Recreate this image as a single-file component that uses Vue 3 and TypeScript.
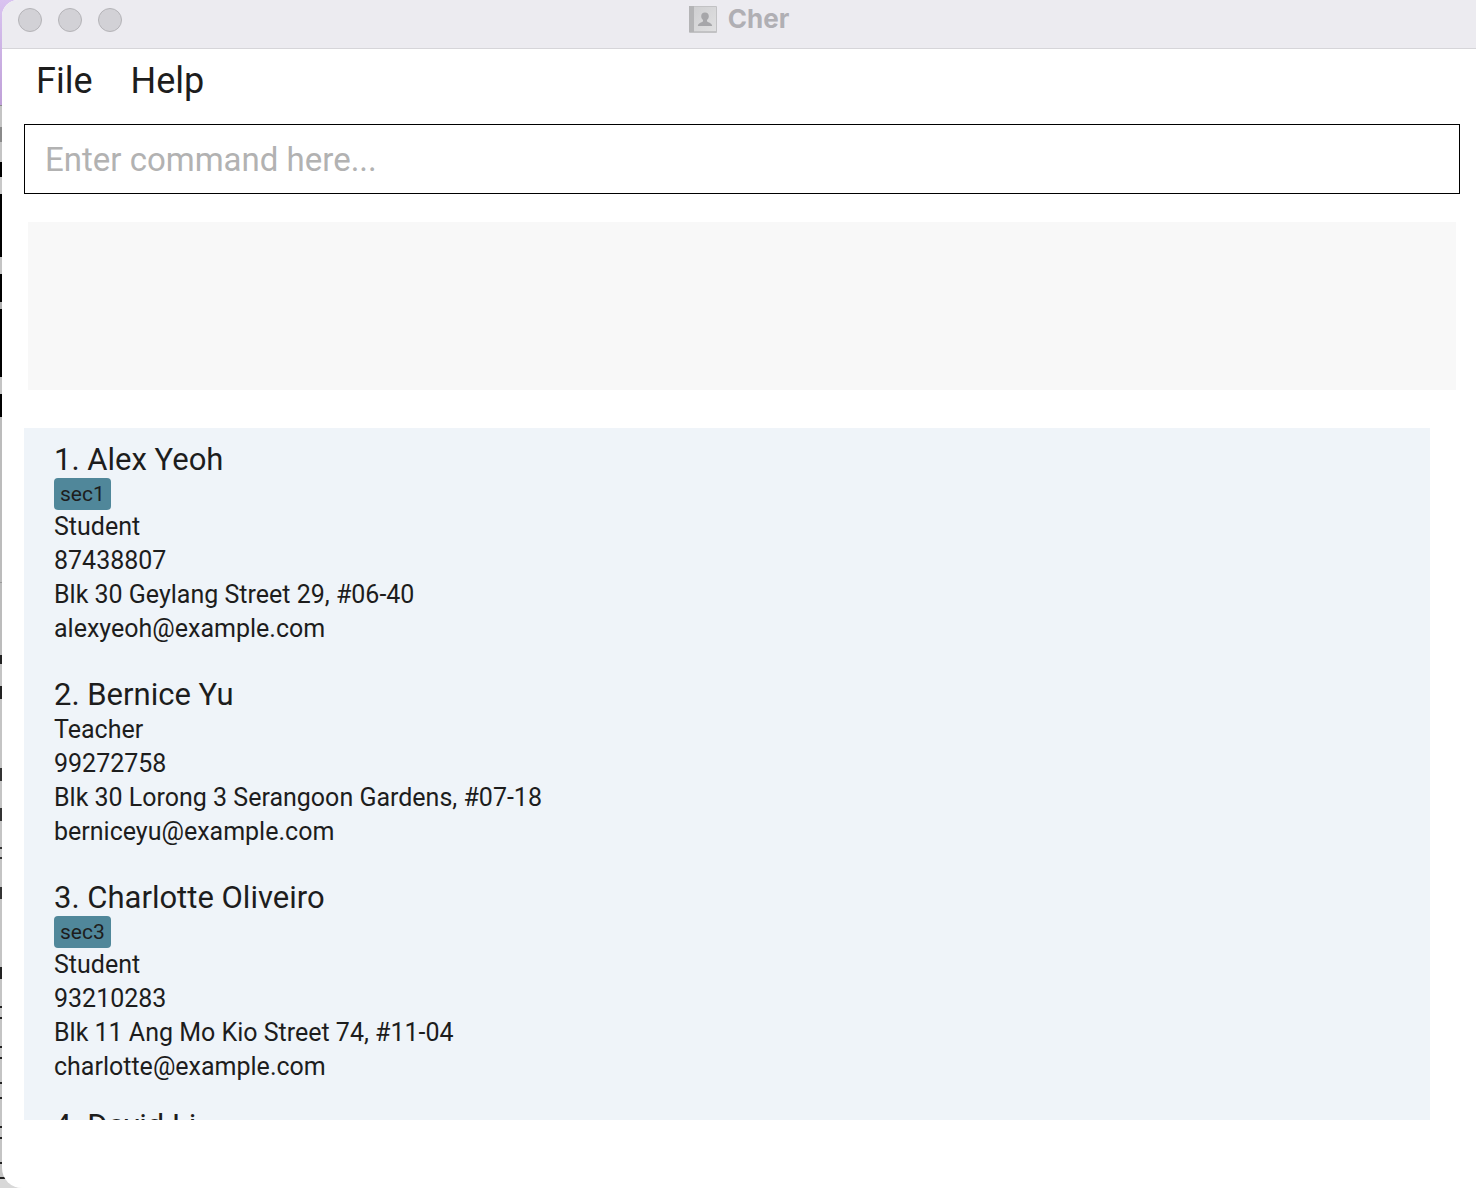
<script setup lang="ts">
import { ref } from 'vue'

interface Person {
  id: number
  name: string
  tags: string[]
  role: string
  phone: string
  address: string
  email: string
}

const menus: string[] = ['File', 'Help']
const command = ref('')
const result = ref('')

const people: Person[] = [
  {
    id: 1,
    name: 'Alex Yeoh',
    tags: ['sec1'],
    role: 'Student',
    phone: '87438807',
    address: 'Blk 30 Geylang Street 29, #06-40',
    email: 'alexyeoh@example.com',
  },
  {
    id: 2,
    name: 'Bernice Yu',
    tags: [],
    role: 'Teacher',
    phone: '99272758',
    address: 'Blk 30 Lorong 3 Serangoon Gardens, #07-18',
    email: 'berniceyu@example.com',
  },
  {
    id: 3,
    name: 'Charlotte Oliveiro',
    tags: ['sec3'],
    role: 'Student',
    phone: '93210283',
    address: 'Blk 11 Ang Mo Kio Street 74, #11-04',
    email: 'charlotte@example.com',
  },
  {
    id: 4,
    name: 'David Li',
    tags: [],
    role: '',
    phone: '',
    address: '',
    email: '',
  },
]
</script>

<template>
  <div class="desktop">
    <div class="window">
      <header class="titlebar">
        <div class="lights">
          <button type="button" class="light" aria-label="Close"></button>
          <button type="button" class="light" aria-label="Minimise"></button>
          <button type="button" class="light" aria-label="Zoom"></button>
        </div>
        <h1 class="title">
          <svg class="book" viewBox="0 0 28 27" width="28" height="27" aria-hidden="true">
            <defs>
              <linearGradient id="cover" x1="0" y1="0" x2="1" y2="1">
                <stop offset="0" stop-color="#cfcfd1" />
                <stop offset="1" stop-color="#e0e0e1" />
              </linearGradient>
            </defs>
            <rect x="0" y="0" width="28" height="27" rx="1" fill="#c2c2c4" />
            <rect x="0" y="0" width="5" height="26" fill="#b4b4b6" />
            <rect x="5" y="1" width="22" height="24" fill="url(#cover)" />
            <path
              d="M16 6.500c2.500 0 3.800 1.600 3.800 3.800 0 1.700-.9 2.900-1.800 3.600v1.300c.7 1.200 4.900 1.500 5.200 4.800H8.800c.3-3.300 4.500-3.600 5.200-4.800v-1.300c-.9-.7-1.800-1.900-1.800-3.600 0-2.200 1.300-3.800 3.800-3.800z"
              fill="#a6a6a9"
            />
          </svg>
          <span>Cher</span>
        </h1>
      </header>

      <nav class="menubar">
        <button v-for="menu in menus" :key="menu" type="button" class="menu">{{ menu }}</button>
      </nav>

      <main class="content">
        <input
          v-model="command"
          class="command"
          type="text"
          aria-label="Command"
          placeholder="Enter command here..."
        />
        <output class="result">{{ result }}</output>
        <ul class="people">
          <li v-for="person in people" :key="person.id" class="card">
            <h2 class="name">{{ person.id }}. {{ person.name }}</h2>
            <div v-if="person.tags.length" class="tags">
              <span v-for="tag in person.tags" :key="tag" class="tag">{{ tag }}</span>
            </div>
            <p class="line">{{ person.role }}</p>
            <p class="line">{{ person.phone }}</p>
            <p class="line">{{ person.address }}</p>
            <p class="line">{{ person.email }}</p>
          </li>
        </ul>
      </main>
    </div>
  </div>
</template>

<style>
body {
  margin: 0;
}
</style>

<style scoped>
.desktop {
  box-sizing: border-box;
  height: 100vh;
  padding-left: 2px;
  overflow: hidden;
  font-family: Roboto, 'Liberation Sans', sans-serif;
  color: #1d1d1d;
  /* sliver of the windows behind this one */
  background: linear-gradient(
    #d9c3f0 0, #bfa0d8 105px,
    #8c8c8c 105px, #8c8c8c 106px,
    #c4c4c4 106px, #c4c4c4 127px,
    #8a8a8a 127px, #8a8a8a 142px,
    #c4c4c4 142px, #c4c4c4 162px,
    #000 162px, #000 177px,
    #c8c8c8 177px, #c8c8c8 194px,
    #000 194px, #000 257px,
    #c4c4c4 257px, #c4c4c4 274px,
    #000 274px, #000 302px,
    #b0b0b0 302px, #b0b0b0 309px,
    #000 309px, #000 377px,
    #c4c4c4 377px, #c4c4c4 394px,
    #000 394px, #000 417px,
    #bcbcbc 417px, #bcbcbc 582px,
    #9a9a9a 582px, #9a9a9a 583px,
    #bcbcbc 583px, #bcbcbc 655px,
    #222 655px, #222 664px,
    #c4c4c4 664px, #c4c4c4 686px,
    #222 686px, #222 699px,
    #c4c4c4 699px, #c4c4c4 768px,
    #333 768px, #333 781px,
    #c4c4c4 781px, #c4c4c4 808px,
    #333 808px, #333 821px,
    #c4c4c4 821px, #c4c4c4 847px,
    #333 847px, #333 849px,
    #c4c4c4 849px, #c4c4c4 857px,
    #333 857px, #333 859px,
    #c4c4c4 859px, #c4c4c4 887px,
    #333 887px, #333 899px,
    #c4c4c4 899px, #c4c4c4 967px,
    #222 967px, #222 979px,
    #c4c4c4 979px, #c4c4c4 1006px,
    #222 1006px, #222 1008px,
    #c4c4c4 1008px, #c4c4c4 1017px,
    #222 1017px, #222 1019px,
    #c4c4c4 1019px, #c4c4c4 1046px,
    #222 1046px, #222 1048px,
    #c4c4c4 1048px, #c4c4c4 1057px,
    #222 1057px, #222 1059px,
    #c4c4c4 1059px, #c4c4c4 1082px,
    #222 1082px, #222 1084px,
    #c4c4c4 1084px, #c4c4c4 1097px,
    #222 1097px, #222 1099px,
    #c4c4c4 1099px, #c4c4c4 1126px,
    #222 1126px, #222 1128px,
    #c4c4c4 1128px, #c4c4c4 1137px,
    #222 1137px, #222 1139px,
    #c4c4c4 1139px, #c4c4c4 1162px,
    #222 1162px, #222 1164px,
    #c4c4c4 1164px, #c4c4c4 1177px,
    #222 1177px, #222 1179px,
    #d8d8d8 1179px
  );
}

.window {
  display: flex;
  flex-direction: column;
  height: 100%;
  overflow: hidden;
  background: #fff;
  border-radius: 16px 0 0 20px;
}

.titlebar {
  display: grid;
  grid-template-columns: 1fr auto 1fr;
  align-items: start;
  height: 48px;
  flex: none;
  background: #ecebf0;
  border-bottom: 1px solid #d6d5d9;
}

.lights {
  display: flex;
  gap: 16px;
  padding: 8px 16px;
}

.light {
  box-sizing: border-box;
  width: 24px;
  height: 24px;
  padding: 0;
  border: 1px solid #b4b3b7;
  border-radius: 50%;
  background: #d2d1d6;
}

.title {
  display: flex;
  align-items: center;
  gap: 11px;
  margin: 0;
  padding-top: 3px;
  font-family: Inter, 'Liberation Sans', sans-serif;
  font-size: 26px;
  line-height: 32px;
  font-weight: 700;
  color: #b0afb4;
}

.book {
  display: block;
}

.menubar {
  display: flex;
  flex: none;
  gap: 38px;
  padding: 8px 34px 0;
}

.menu {
  padding: 0;
  border: 0;
  background: none;
  font: inherit;
  font-size: 36px;
  line-height: 48px;
  color: inherit;
}

.content {
  display: flex;
  flex: 1;
  flex-direction: column;
  min-height: 0;
  padding: 19px 16px 68px 22px;
}

.command {
  box-sizing: border-box;
  flex: none;
  width: 100%;
  height: 70px;
  padding: 0 20px;
  border: 1px solid #000;
  border-radius: 0;
  outline: 0;
  background: #fff;
  font: inherit;
  font-size: 33px;
  color: inherit;
}

.command::placeholder {
  color: #b2b2b2;
  opacity: 1;
}

.result {
  display: block;
  flex: none;
  height: 168px;
  margin: 28px 4px 38px;
  background: #f8f8f8;
}

.people {
  flex: 1;
  min-height: 0;
  margin: 0 30px 0 0;
  padding: 0;
  overflow: hidden;
  list-style: none;
  background: #eff4f9;
}

.card {
  padding: 13px 30px 17px;
}

.card:last-child {
  padding-top: 6px;
}

.name {
  margin: 0;
  font-size: 31px;
  line-height: 37px;
  font-weight: 400;
}

.tags {
  display: flex;
  gap: 6px;
}

.tag {
  padding: 0 6px;
  border-radius: 4px;
  background: #50879a;
  font-size: 21px;
  line-height: 32px;
}

.line {
  margin: 0;
  min-height: 34px;
  font-size: 25px;
  line-height: 34px;
}
</style>
